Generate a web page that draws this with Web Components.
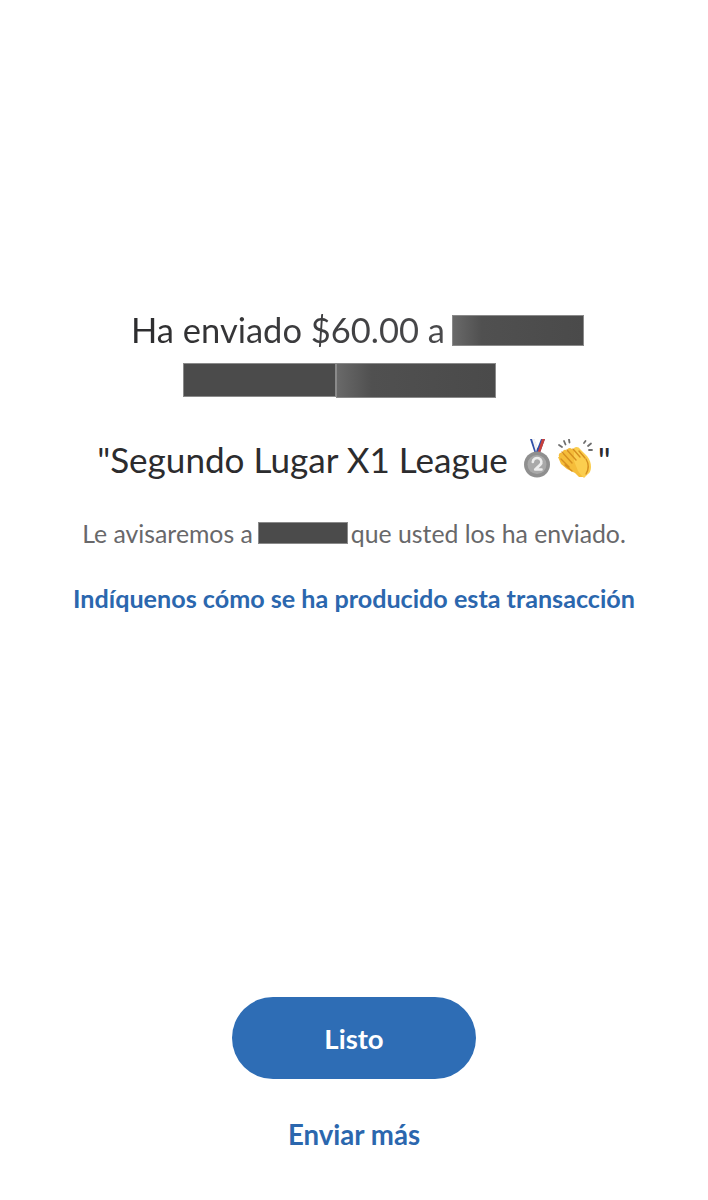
<!DOCTYPE html>
<html lang="es">
<head>
<meta charset="utf-8">
<title>Ha enviado</title>
<style>
  html, body { margin: 0; padding: 0; background: #fff; }
  body { font-family: Lato, "Open Sans", sans-serif; }
</style>
</head>
<body>
<template id="t-screen">
  <style>
    :host { display: flex; flex-direction: column; align-items: center; width: 708px; height: 1200px; box-sizing: border-box; padding: 310px 0 0; background: #fff; overflow: hidden; }
    .foot { margin-top: auto; display: flex; flex-direction: column; align-items: center; }
  </style>
  <slot></slot>
  <div class="foot"><slot name="foot"></slot></div>
</template>

<template id="t-redact">
  <style>
    :host { display: inline-block; vertical-align: middle; box-sizing: border-box; background: #4b4b4b; border: 1px solid #8a8a8a; }
    :host([soft]) { background: linear-gradient(90deg, #696969 0%, #505050 22%, #4a4a4a 100%); }
  </style>
</template>

<template id="t-title">
  <style>
    :host { display: block; width: 708px; color: #2f2f2f; font-size: 34.500px; line-height: 40px; }
    .l1 { display: flex; justify-content: center; align-items: center; height: 40px; margin-left: 7px; }
    .l2 { display: flex; justify-content: center; align-items: center; height: 34px; margin-top: 13px; margin-right: 29px; }
    .t { background: linear-gradient(90deg, #2c2c2e 0%, #4a4a4c 100%); -webkit-background-clip: text; background-clip: text; color: transparent; }
    .r1 { width: 132px; height: 31px; margin-left: 7px; }
    .r2 { width: 153px; height: 34px; }
    .r3 { width: 160px; height: 35px; margin-top: 1px; }
  </style>
  <div class="l1"><span class="t">Ha enviado $60.00 a</span><x-redact class="r1" soft></x-redact></div>
  <div class="l2"><x-redact class="r2"></x-redact><x-redact class="r3" soft></x-redact></div>
</template>

<template id="t-note">
  <style>
    :host { display: flex; justify-content: center; align-items: center; margin-top: 42px; width: 708px; height: 40px; color: #2c2c2e; font-size: 35.100px; white-space: nowrap; }
    svg { display: block; flex: none; }
    .m { margin-left: 15px; margin-top: -1px; }
    .c { margin-left: 7px; margin-top: -1px; }
  </style>
  <span>"Segundo Lugar X1 League</span>
  <svg class="m" width="28" height="39" viewBox="0 0 28 39" aria-hidden="true">
    <path d="M7 0h4l3.500 9L18 0h4l-5.500 15h-4.500z" fill="#2f4fa8"/>
    <path d="M9 0h2.500l3 8-1.500 5z" fill="#f3f3f3"/>
    <path d="M19 0h3l-5 14h-2.500z" fill="#c9403a"/>
    <circle cx="14" cy="25.500" r="13" fill="#8f8f8f"/>
    <circle cx="14" cy="25.500" r="9.500" fill="#a9a9a9"/>
    <path d="M9.800 23a4.300 4 0 1 1 7.400 2.800L12.200 30.500h6.300" fill="none" stroke="#ededed" stroke-width="2.600" stroke-linecap="round" stroke-linejoin="round"/>
  </svg>
  <svg class="c" width="39" height="39" viewBox="0 0 39 39" aria-hidden="true">
    <g fill="none" stroke="#6e6e6e" stroke-width="1.800" stroke-linecap="round">
      <path d="M1 6l3 2M6 2l1.500 3.500M11 0.500l0.500 3"/>
      <path d="M26 4l1.500-2M30 7l3-2.500M31 11h3"/>
    </g>
    <path d="M1 18c-1-3 1-5 3-4l1 1c-1-3 1-5 3-4l1 1c0-3 3-4 5-2l2 1c1-2 4-2 5 0l7 8c4 5 4 12 0 16l-3 3-4 0-4-4-8-4-6-5-3-7z" fill="#f5bd3a"/>
    <path d="M16 9c2-2 5-1 6 1l7 7c3 4 4 7 4 11 0 3-1 6-3 7l-4 4c-2-2-4-4-6-7l-4-10z" fill="#fbce4f"/>
    <g fill="none" stroke="#d68f1f" stroke-width="1.400" stroke-linecap="round">
      <path d="M4 13l10 11M9 11l9 10M15 10l7 8M21 12l6 7"/>
      <path d="M3 20l8 8M7 26l7 6"/>
      <path d="M28 20c3 5 3 10 0 15"/>
    </g>
  </svg>
  <span style="margin-left:1px">"</span>
</template>

<template id="t-info">
  <style>
    :host { display: flex; justify-content: center; align-items: center; margin-top: 34px; width: 708px; height: 40px; color: #68686a; font-size: 24.800px; white-space: nowrap; }
    x-redact { width: 90px; height: 22px; margin: 0 3px 0 5px; }
  </style>
  <span>Le avisaremos a</span><x-redact></x-redact><span>que usted los ha enviado.</span>
</template>

<template id="t-link">
  <style>
    :host { display: block; text-align: center; color: #2b67ae; font-weight: 700; font-size: var(--fs, 24px); line-height: 40px; white-space: nowrap; }
  </style>
  <slot></slot>
</template>

<template id="t-button">
  <style>
    :host { display: flex; align-items: center; justify-content: center; width: 244px; height: 82px; border-radius: 41px; background: #2e6db5; color: #fff; font-weight: 700; font-size: 27.500px; padding-top: 1px; box-sizing: border-box; }
  </style>
  <slot></slot>
</template>

<x-screen>
  <x-title></x-title>
  <x-note></x-note>
  <x-info></x-info>
  <x-link style="margin-top:25px;--fs:25.150px">Indíquenos cómo se ha producido esta transacción</x-link>
  <x-button slot="foot">Listo</x-button>
  <x-link slot="foot" style="margin-top:36px;margin-bottom:45px;--fs:27.600px">Enviar más</x-link>
</x-screen>

<script>
  function def(name, id) {
    customElements.define(name, class extends HTMLElement {
      constructor() {
        super();
        this.attachShadow({ mode: 'open' }).appendChild(document.getElementById(id).content.cloneNode(true));
      }
    });
  }
  def('x-redact', 't-redact');
  def('x-title', 't-title');
  def('x-note', 't-note');
  def('x-info', 't-info');
  def('x-link', 't-link');
  def('x-button', 't-button');
  def('x-screen', 't-screen');
</script>
</body>
</html>
